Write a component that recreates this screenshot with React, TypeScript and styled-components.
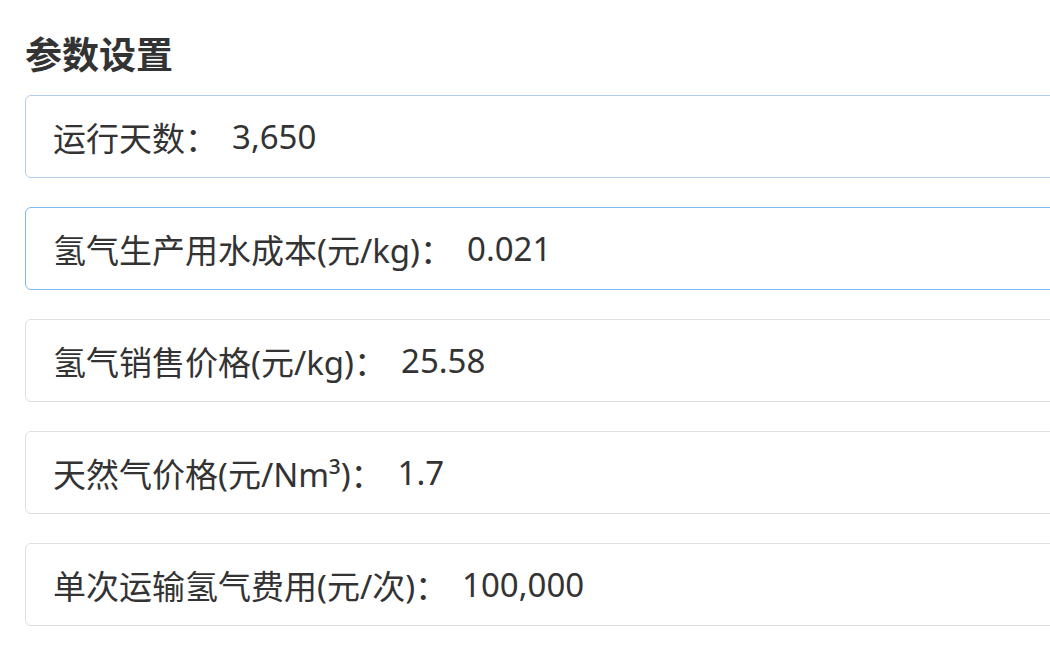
import React from "react";
import styled, { createGlobalStyle } from "styled-components";

const Global = createGlobalStyle`
  html, body {
    margin: 0;
    padding: 0;
    background: #ffffff;
    overflow: hidden;
  }
  body {
    font-family: "Noto Sans", "Noto Sans CJK SC", sans-serif;
    color: #333333;
  }
`;

const Page = styled.div`
  width: 1100px;
  padding: 31px 0 0 25px;
  box-sizing: border-box;
`;

const Title = styled.h2`
  margin: 0 0 20px 0;
  font-size: 37px;
  line-height: 44px;
  font-weight: 700;
  color: #333333;
  font-family: "Noto Sans CJK SC", sans-serif;
`;

const List = styled.div`
  display: flex;
  flex-direction: column;
  gap: 29px;
`;

type Tone = "hover" | "focus" | "plain";

const borderFor: Record<Tone, string> = {
  hover: "#b3cde9",
  focus: "#7dbbf2",
  plain: "#dcdfe3",
};

const Card = styled.div<{ $tone: Tone }>`
  height: 83px;
  box-sizing: border-box;
  border: 1px solid ${(p) => borderFor[p.$tone]};
  border-radius: 6px;
  background: #ffffff;
  display: flex;
  align-items: center;
  padding-left: 27px;
  font-size: 33px;
  color: #333333;
  white-space: pre;
`;

const Label = styled.span`
  font-family: "Noto Sans", "Noto Sans CJK SC", sans-serif;
`;

const Value = styled.span`
  margin-left: 14px;
`;

const items: { label: string; value: string; tone: Tone }[] = [
  { label: "运行天数：", value: "3,650", tone: "hover" },
  { label: "氢气生产用水成本(元/kg)：", value: "0.021", tone: "focus" },
  { label: "氢气销售价格(元/kg)：", value: "25.58", tone: "plain" },
  { label: "天然气价格(元/Nm³)：", value: "1.7", tone: "plain" },
  { label: "单次运输氢气费用(元/次)：", value: "100,000", tone: "plain" },
];

export default function App() {
  return (
    <>
      <Global />
      <Page>
        <Title>参数设置</Title>
        <List>
          {items.map((it) => (
            <Card key={it.label} $tone={it.tone}>
              <Label>{it.label}</Label>
              <Value>{it.value}</Value>
            </Card>
          ))}
        </List>
      </Page>
    </>
  );
}
